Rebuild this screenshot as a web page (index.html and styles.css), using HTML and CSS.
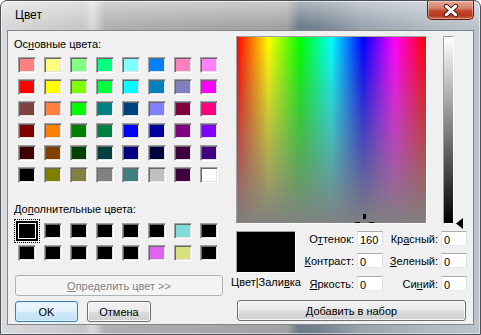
FILE: index.html
```html
<!DOCTYPE html>
<html lang="ru">
<head>
    <meta charset="UTF-8">
    <title>Цвет</title>
    <link rel="stylesheet" href="styles.css">
</head>
<body>
<div class="window">
    <div class="titlebar">
        <span class="title">Цвет</span>
        <button class="close-btn" title="Закрыть">
            <svg viewBox="0 0 47 19" width="47" height="19">
                <path d="M19 5l10 9M29 5l-10 9" stroke="#3a1510" stroke-width="5" stroke-linecap="round"/>
                <path d="M19 5l10 9M29 5l-10 9" stroke="#fff" stroke-width="3" stroke-linecap="round"/>
            </svg>
        </button>
    </div>
    <div class="client">
        <div class="left">
            <div class="label first">Ос<u>н</u>овные цвета:</div>
            <div class="swatches">
                <span class="swatch" style="background:#ff8080"></span>
                <span class="swatch" style="background:#ffff80"></span>
                <span class="swatch" style="background:#80ff80"></span>
                <span class="swatch" style="background:#00ff80"></span>
                <span class="swatch" style="background:#80ffff"></span>
                <span class="swatch" style="background:#0080ff"></span>
                <span class="swatch" style="background:#ff80c0"></span>
                <span class="swatch" style="background:#ff80ff"></span>

                <span class="swatch" style="background:#ff0000"></span>
                <span class="swatch" style="background:#ffff00"></span>
                <span class="swatch" style="background:#80ff00"></span>
                <span class="swatch" style="background:#00ff40"></span>
                <span class="swatch" style="background:#00ffff"></span>
                <span class="swatch" style="background:#0080c0"></span>
                <span class="swatch" style="background:#8080c0"></span>
                <span class="swatch" style="background:#ff00ff"></span>

                <span class="swatch" style="background:#804040"></span>
                <span class="swatch" style="background:#ff8040"></span>
                <span class="swatch" style="background:#00ff00"></span>
                <span class="swatch" style="background:#008080"></span>
                <span class="swatch" style="background:#004080"></span>
                <span class="swatch" style="background:#8080ff"></span>
                <span class="swatch" style="background:#800040"></span>
                <span class="swatch" style="background:#ff0080"></span>

                <span class="swatch" style="background:#800000"></span>
                <span class="swatch" style="background:#ff8000"></span>
                <span class="swatch" style="background:#008000"></span>
                <span class="swatch" style="background:#008040"></span>
                <span class="swatch" style="background:#0000ff"></span>
                <span class="swatch" style="background:#0000a0"></span>
                <span class="swatch" style="background:#800080"></span>
                <span class="swatch" style="background:#8000ff"></span>

                <span class="swatch" style="background:#400000"></span>
                <span class="swatch" style="background:#804000"></span>
                <span class="swatch" style="background:#004000"></span>
                <span class="swatch" style="background:#004040"></span>
                <span class="swatch" style="background:#000080"></span>
                <span class="swatch" style="background:#000040"></span>
                <span class="swatch" style="background:#400040"></span>
                <span class="swatch" style="background:#400080"></span>

                <span class="swatch" style="background:#000000"></span>
                <span class="swatch" style="background:#808000"></span>
                <span class="swatch" style="background:#808040"></span>
                <span class="swatch" style="background:#808080"></span>
                <span class="swatch" style="background:#408080"></span>
                <span class="swatch" style="background:#c0c0c0"></span>
                <span class="swatch" style="background:#400040"></span>
                <span class="swatch" style="background:#ffffff"></span>
            </div>

            <div class="label second">До<u>п</u>олнительные цвета:</div>
            <div class="swatches custom">
                <span class="swatch selected" style="background:#000"></span>
                <span class="swatch" style="background:#000"></span>
                <span class="swatch" style="background:#000"></span>
                <span class="swatch" style="background:#000"></span>
                <span class="swatch" style="background:#000"></span>
                <span class="swatch" style="background:#000"></span>
                <span class="swatch" style="background:#80dcd4"></span>
                <span class="swatch" style="background:#000"></span>

                <span class="swatch" style="background:#000"></span>
                <span class="swatch" style="background:#000"></span>
                <span class="swatch" style="background:#000"></span>
                <span class="swatch" style="background:#000"></span>
                <span class="swatch" style="background:#000"></span>
                <span class="swatch" style="background:#e064f0"></span>
                <span class="swatch" style="background:#d8e07a"></span>
                <span class="swatch" style="background:#000"></span>
            </div>

            <button class="btn define-btn" disabled><u>О</u>пределить цвет &gt;&gt;</button>
            <div class="actions">
                <button class="btn ok-btn">OK</button>
                <button class="btn cancel-btn">Отмена</button>
            </div>
        </div>

        <div class="right">
            <div class="picker">
                <div class="spectrum">
                    <svg class="cross" viewBox="0 0 19 12" width="19" height="12">
                        <rect x="8" y="0" width="3" height="5" fill="#000"/>
                        <rect x="0" y="8" width="5" height="3" fill="#000"/>
                        <rect x="14" y="8" width="5" height="3" fill="#000"/>
                    </svg>
                </div>
                <div class="lum"></div>
                <svg class="lum-arrow" viewBox="0 0 7 11" width="7" height="11">
                    <polygon points="0,5.5 7,0 7,11" fill="#000"/>
                </svg>
            </div>

            <div class="info">
                <div class="preview"></div>
                <div class="preview-label"><span>Цвет|Зали<u>в</u>ка</span></div>

                <label class="field-label r1 c1">О<u>т</u>тенок:</label>
                <input class="field r1 c1" type="text" value="160">
                <label class="field-label r2 c1"><u>К</u>онтраст:</label>
                <input class="field r2 c1" type="text" value="0">
                <label class="field-label r3 c1"><u>Я</u>ркость:</label>
                <input class="field r3 c1" type="text" value="0">

                <label class="field-label r1 c2">Кр<u>а</u>сный:</label>
                <input class="field r1 c2" type="text" value="0">
                <label class="field-label r2 c2"><u>З</u>еленый:</label>
                <input class="field r2 c2" type="text" value="0">
                <label class="field-label r3 c2">Си<u>н</u>ий:</label>
                <input class="field r3 c2" type="text" value="0">
            </div>

            <button class="btn add-btn"><u>Д</u>обавить в набор</button>
        </div>
    </div>
</div>
</body>
</html>
```

FILE: styles.css
```css
:root {
    --dlg-bg: #f0f0f0;
    --sunken-dark: #a0a0a0;
    --sunken-light: #fff;
    --btn-border: #707070;
    --btn-default: #3c7fb1;
    --disabled: #838383;
}
body {
    margin: 0;
    font-family: "Liberation Sans", Arial, sans-serif;
    font-size: 11px;
    color: #000;
    background: #fff;
}
u {
    text-decoration-thickness: 1px;
    text-underline-offset: 1px;
}

/* window frame */
.window {
    width: 481px;
    height: 335px;
    box-sizing: border-box;
    border: 1px solid #4b5159;
    border-radius: 7px 7px 0 0;
    padding: 0 6px 9px 6px;
    display: flex;
    flex-direction: column;
    background:
        linear-gradient(to bottom, rgba(255,255,255,0.45), rgba(255,255,255,0) 26px),
        linear-gradient(90deg, #d9d9d9 0, #c6c6c6 82px, #d8d8d8 92px, #b0b0b0 104px, #a7a7a7 200px, #a2a2a2 286px, #6d7b8b 298px, #75838f 318px, #98a3ae 360px, #b2bac3 430px, #bcc3cb 481px);
    box-shadow: inset 0 0 0 1px rgba(255,255,255,0.55);
}
.titlebar {
    height: 29px;
    display: flex;
    align-items: flex-start;
}
.title {
    font-size: 12px;
    align-self: center;
    margin-left: 8px;
    margin-top: -1px;
}
.close-btn {
    margin-left: auto;
    width: 47px;
    height: 19px;
    padding: 0;
    border: 1px solid #5b1f16;
    border-top: none;
    border-radius: 0 0 5px 5px;
    background: linear-gradient(to bottom, #e6a798 0, #d6806c 40%, #c2472b 55%, #b8391d 80%, #d0694a 100%);
    box-shadow: inset 0 0 0 1px rgba(255,255,255,0.35);
    display: flex;
}
.close-btn svg {
    display: block;
}

/* client area */
.client {
    flex: 1;
    border: 1px solid #7c8792;
    background: var(--dlg-bg);
    display: grid;
    grid-template-columns: 228px 1fr;
}
.label {
    line-height: 13px;
    margin-left: 6px;
}
.label.first { margin-top: 7px; }
.label.second { margin-top: 20px; }

.swatches {
    display: grid;
    grid-template-columns: repeat(8, 18px);
    grid-auto-rows: 16px;
    gap: 6px 8px;
    margin: 6px 0 0 10px;
}
.swatches.custom { margin-top: 7px; }
.swatch {
    box-sizing: border-box;
    border: 1px solid;
    border-color: var(--sunken-dark) var(--sunken-light) var(--sunken-light) var(--sunken-dark);
    box-shadow: inset 1px 1px 0 #696969, inset -1px -1px 0 #e3e3e3;
}
.swatch.selected {
    border-color: #fff;
    box-shadow: 0 0 0 2px #000, inset 0 0 0 1px #000;
    outline: 1px dotted #000;
    outline-offset: 3px;
}

/* buttons */
.btn {
    font-family: inherit;
    font-size: 11px;
    color: #000;
    height: 21px;
    padding: 0;
    border: 1px solid var(--btn-border);
    border-radius: 3px;
    background: linear-gradient(to bottom, #f2f2f2 0, #ebebeb 50%, #dddddd 50%, #cfcfcf 100%);
    box-shadow: inset 0 0 0 1px rgba(255,255,255,0.8);
}
.btn:disabled {
    color: var(--disabled);
    border-color: #adb2b5;
    background: #f4f4f4;
    box-shadow: none;
}
.define-btn {
    display: block;
    width: 208px;
    margin: 14px 0 0 7px;
}
.actions {
    display: flex;
    gap: 9px;
    margin: 5px 0 0 7px;
}
.ok-btn {
    width: 63px;
    border-color: var(--btn-default);
    background: linear-gradient(to bottom, #eef7fd 0, #e2f1fb 50%, #cfe8f7 50%, #c0e0f3 100%);
    box-shadow: inset 0 0 0 1px rgba(215,240,252,0.9);
}
.cancel-btn { width: 64px; }

/* right side */
.picker {
    display: flex;
    gap: 16px;
    margin-top: 5px;
    height: 188px;
    position: relative;
}
.spectrum {
    width: 191px;
    height: 188px;
    box-sizing: border-box;
    border: 1px solid;
    border-color: var(--sunken-dark) var(--sunken-light) var(--sunken-light) var(--sunken-dark);
    position: relative;
    overflow: hidden;
    background:
        linear-gradient(to bottom, rgba(128,128,128,0) 0, rgba(128,128,128,1) 100%),
        linear-gradient(90deg, #ff0000 0, #ffff00 16.7%, #00ff00 33.3%, #00ffff 50%, #0000ff 66.7%, #ff00ff 83.3%, #ff0000 100%);
}
.cross {
    position: absolute;
    left: 118px;
    top: 177px;
    display: block;
}
.lum {
    width: 11px;
    height: 188px;
    box-sizing: border-box;
    border: 1px solid;
    border-color: var(--sunken-dark) var(--sunken-light) var(--sunken-light) var(--sunken-dark);
    background: linear-gradient(to bottom, #fff 0, #000 100%);
}
.lum-arrow {
    position: absolute;
    left: 220px;
    top: 182px;
    display: block;
}

.info {
    display: grid;
    grid-template-columns: 60px 61px 26px 58px 26px;
    grid-template-rows: 22px 23px 15px;
    margin-top: 7px;
}
.preview {
    grid-column: 1;
    grid-row: 1 / 3;
    height: 42px;
    box-sizing: border-box;
    border: 1px solid;
    border-color: var(--sunken-dark) var(--sunken-light) var(--sunken-light) var(--sunken-dark);
    background: #000;
}
.preview-label {
    grid-column: 1;
    grid-row: 3;
    display: flex;
    justify-content: center;
    white-space: nowrap;
    line-height: 13px;
    margin-top: 0;
}
.field-label {
    line-height: 13px;
    padding: 2px 3px 0 0;
    text-align: right;
    white-space: nowrap;
}
.field {
    width: 26px;
    height: 15px;
    box-sizing: border-box;
    margin: 0;
    padding: 2px 0 0 2px;
    font-family: inherit;
    font-size: 11px;
    color: #000;
    border: 1px solid;
    border-color: #abadb3 #dbdfe6 #e3e9ef #e2e3ea;
    background: #fff;
    outline: none;
}
.r1 { grid-row: 1; }
.r2 { grid-row: 2; }
.r3 { grid-row: 3; }
.field-label.c1 { grid-column: 2; }
.field.c1 { grid-column: 3; }
.field-label.c2 { grid-column: 4; }
.field.c2 { grid-column: 5; }

.add-btn {
    display: block;
    width: 229px;
    margin: 9px 0 0 1px;
}
```
